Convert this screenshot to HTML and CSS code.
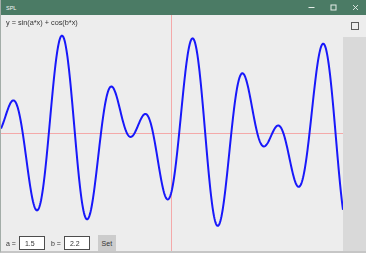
FILE: index.html
```html
<!DOCTYPE html>
<html lang="en">
<head>
    <meta charset="UTF-8">
    <meta name="viewport" content="width=device-width, initial-scale=1.0">
    <title>SPL</title>
    <link rel="stylesheet" href="styles.css">
</head>
<body>
    <div class="window">
        <header class="titlebar">
            <span class="title">SPL</span>
            <div class="controls">
                <span class="ctl">
                    <svg width="7" height="7" viewBox="0 0 7 7"><path d="M0.5 3.5h6" stroke="#e6ede9" stroke-width="1"/></svg>
                </span>
                <span class="ctl">
                    <svg width="7" height="7" viewBox="0 0 7 7"><rect x="1" y="1" width="5" height="5" fill="none" stroke="#e6ede9" stroke-width="1"/></svg>
                </span>
                <span class="ctl">
                    <svg width="7" height="7" viewBox="0 0 7 7"><path d="M1 1l5 5M6 1l-5 5" stroke="#e6ede9" stroke-width="0.9"/></svg>
                </span>
            </div>
        </header>
        <div class="client">
            <div class="plot">
                <canvas id="graph" width="342" height="236"></canvas>
                <div class="formula">y = sin(a*x) + cos(b*x)</div>
                <form class="params" id="params">
                    <label for="a">a =</label>
                    <input type="text" id="a" value="1.5">
                    <label for="b" class="second">b =</label>
                    <input type="text" id="b" value="2.2">
                    <button type="submit" class="set-btn">Set</button>
                </form>
            </div>
            <div class="side">
                <span class="check"></span>
                <div class="scroll"></div>
            </div>
        </div>
    </div>

    <script>
        const canvas = document.getElementById("graph");
        const ctx = canvas.getContext("2d");

        // where x = 0 sits on the canvas and how many pixels per unit
        const originX = 236.8;
        const scaleX = 15.35;
        const scaleY = 49;
        const midY = 118.3;

        function draw(a, b) {
            const w = canvas.width;
            const h = canvas.height;
            ctx.clearRect(0, 0, w, h);

            // axes
            ctx.strokeStyle = "#f4a9a9";
            ctx.lineWidth = 1;
            ctx.beginPath();
            ctx.moveTo(170.5, 0);
            ctx.lineTo(170.5, h);
            ctx.moveTo(0, 118.5);
            ctx.lineTo(w, 118.5);
            ctx.stroke();

            // curve
            ctx.strokeStyle = "#1818fa";
            ctx.lineWidth = 2;
            ctx.lineJoin = "round";
            ctx.beginPath();
            for (let px = 0; px <= w; px += 0.5) {
                const x = (px - originX) / scaleX;
                const y = midY - scaleY * (Math.sin(a * x) + Math.cos(b * x));
                if (px === 0) ctx.moveTo(px, y);
                else ctx.lineTo(px, y);
            }
            ctx.stroke();
        }

        document.getElementById("params").addEventListener("submit", (e) => {
            e.preventDefault();
            const a = parseFloat(document.getElementById("a").value) || 0;
            const b = parseFloat(document.getElementById("b").value) || 0;
            draw(a, b);
        });

        draw(1.5, 2.2);
    </script>
</body>
</html>
```

FILE: styles.css
```css
body {
    margin: 0;
    padding: 0;
    font-family: "Liberation Sans", Arial, sans-serif;
    background-color: #ededed;
}
.window {
    width: 365px;
    height: 251px;
    border-left: 1px solid #a3ada8;
    border-bottom: 2px solid #c6c6c6;
    display: flex;
    flex-direction: column;
    overflow: hidden;
}
/* title bar */
.titlebar {
    height: 15px;
    flex: none;
    background-color: #4b7b65;
    display: flex;
    align-items: center;
    justify-content: space-between;
}
.title {
    color: #f2f6f4;
    font-size: 5.5px;
    margin-left: 5px;
}
.controls {
    display: flex;
    height: 100%;
}
.ctl {
    width: 22px;
    display: flex;
    align-items: center;
    justify-content: center;
}
.ctl svg {
    display: block;
}
/* client area */
.client {
    flex: 1;
    display: flex;
    min-height: 0;
}
.plot {
    position: relative;
    width: 342px;
    height: 236px;
    flex: none;
}
#graph {
    display: block;
}
.formula {
    position: absolute;
    left: 5px;
    top: 3px;
    font-size: 7.3px;
    line-height: 10px;
    color: #333;
}
.params {
    position: absolute;
    left: 5px;
    bottom: 0;
    height: 16px;
    margin: 0;
    display: flex;
    align-items: center;
    font-size: 7px;
    color: #333;
}
.params input {
    margin: 0 0 0 3px;
    padding: 0 0 0 5px;
    box-sizing: border-box;
    width: 26px;
    height: 14px;
    border: 1px solid #4d4d4d;
    background-color: #fff;
    font-family: inherit;
    font-size: 7px;
    color: #333;
    outline: none;
}
.params .second {
    margin-left: 6px;
}
.set-btn {
    margin-left: 8px;
    width: 18px;
    height: 16px;
    padding: 0;
    border: none;
    background-color: #cccccc;
    font-family: inherit;
    font-size: 7px;
    color: #333;
    cursor: pointer;
}
/* right side */
.side {
    flex: 1;
    display: flex;
    flex-direction: column;
    align-items: center;
    padding-top: 7px;
}
.check {
    width: 8px;
    height: 8px;
    box-sizing: border-box;
    border: 1px solid #5c5c5c;
    flex: none;
}
.scroll {
    margin-top: 7px;
    align-self: stretch;
    flex: 1;
    background-color: #d9d9d9;
}
```
